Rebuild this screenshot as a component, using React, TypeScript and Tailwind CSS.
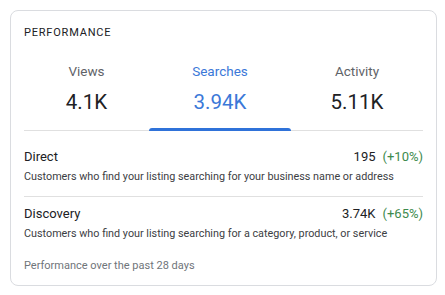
export default function App() {
  const tabs = [
    { label: "Views", value: "4.1K", w: "w-[125px]", active: false },
    { label: "Searches", value: "3.94K", w: "w-[142px]", active: true },
    { label: "Activity", value: "5.11K", w: "flex-1", active: false },
  ];
  const rows = [
    { name: "Direct", value: "195", change: "(+10%)", desc: "Customers who find your listing searching for your business name or address" },
    { name: "Discovery", value: "3.74K", change: "(+65%)", desc: "Customers who find your listing searching for a category, product, or service" },
  ];

  return (
    <div className="w-[445px] h-[295px] bg-white pt-[10px] pl-[10px]" style={{ fontFamily: "Roboto, 'Liberation Sans', sans-serif" }}>
      <div className="w-[427px] h-[276px] border border-[#dadce0] rounded-lg px-[13px] pt-[16px]">
        <p className="text-[11px] tracking-[0.8px] text-[#202124] leading-[12px]">PERFORMANCE</p>

        {/* Tabs */}
        <div className="flex mt-[24px] border-b border-[#e0e0e0]">
          {tabs.map((t) => (
            <div key={t.label} className={`${t.w} flex flex-col items-center relative pb-[16px]`}>
              <span className={`text-[13.5px] leading-[16px] ${t.active ? "text-[#3b78d8]" : "text-[#5f6368]"}`}>{t.label}</span>
              <span className={`text-[20.5px] leading-[24px] mt-[11px] ${t.active ? "text-[#3b78d8]" : "text-[#202124]"}`}>{t.value}</span>
              {t.active && <div className="absolute left-0 right-0 bottom-[-1px] h-[3px] bg-[#2f72d9] rounded-t-sm" />}
            </div>
          ))}
        </div>

        {/* Rows */}
        {rows.map((r, i) => (
          <div key={r.name} className={i === 0 ? "pt-[18px] pb-[12px] border-b border-[#e0e0e0]" : "pt-[9px]"}>
            <div className="flex justify-between items-center text-[13px] leading-[16px] text-[#202124]">
              <span>{r.name}</span>
              <span>
                {r.value}
                <span className="ml-[7px] text-[#3d8a4d]">{r.change}</span>
              </span>
            </div>
            <p className="text-[10.8px] leading-[14px] text-[#3c4043] mt-[5px]">{r.desc}</p>
          </div>
        ))}

        <p className="text-[11px] leading-[14px] text-[#70757a] mt-[18px]">Performance over the past 28 days</p>
      </div>
    </div>
  );
}
